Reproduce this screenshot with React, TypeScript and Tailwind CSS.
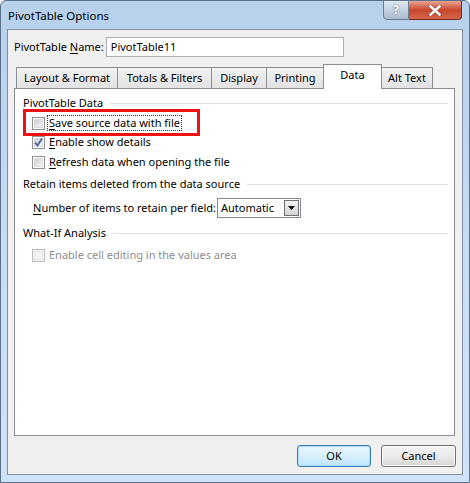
import React from "react";

const font = { fontFamily: '"Noto Sans", "Segoe UI", Arial, sans-serif' };

function U({ children }: { children: React.ReactNode }) {
  return <span className="underline underline-offset-[2px] decoration-[1px]">{children}</span>;
}

function Checkbox({ checked, disabled }: { checked?: boolean; disabled?: boolean }) {
  return (
    <div
      className={
        "w-[13px] h-[13px] border flex items-center justify-center shrink-0 " +
        (disabled ? "border-[#bcbcbc] bg-[#f4f4f4]" : "border-[#8e8f8f] bg-white")
      }
    >
      <div
        className={
          "w-[9px] h-[9px] flex items-center justify-center " +
          (disabled ? "bg-[#f4f4f4] border border-[#e6e6e6]" : "bg-gradient-to-br from-[#cbcfd5] to-[#f6f6f6] border border-[#d8dbe0]")
        }
      >
        {checked && (
          <svg width="9" height="9" viewBox="0 0 9 9" className="overflow-visible">
            <path d="M1 4.5 L3.5 7.5 L8 0.5" fill="none" stroke="#4a5f97" strokeWidth="1.8" />
          </svg>
        )}
      </div>
    </div>
  );
}

function Header({ text }: { text: string }) {
  return (
    <div className="flex items-center h-[16px]">
      <span className="whitespace-nowrap">{text}</span>
      <div className="flex-1 h-px bg-[#dcdfe4] ml-[7px]" />
    </div>
  );
}

function Tab({ label, w }: { label: string; w: string }) {
  return (
    <div
      className={
        "h-[21px] mt-[3px] border border-[#8b8e95] border-b-0 -mr-px flex items-center justify-center bg-gradient-to-b from-[#f2f2f2] to-[#e2e2e2] " +
        w
      }
    >
      {label}
    </div>
  );
}

export default function App() {
  return (
    <div
      className="w-[470px] h-[483px] relative text-[11px] text-black bg-gradient-to-b from-[#b7d0ec] via-[#c8dcf2] to-[#cfe2f6] border border-[#5a6f8a] rounded-t-[6px] overflow-hidden"
      style={font}
    >
      {/* title bar */}
      <div className="h-[28px] flex items-center pl-[7px] text-[11.5px] pt-[1px]">PivotTable Options</div>
      {/* caption buttons */}
      <div className="absolute top-[-1px] left-[382px] flex">
        <div className="w-[26px] h-[20px] border border-[#6b7e98] rounded-bl-[4px] bg-gradient-to-b from-[#dfe8f2] via-[#c4d2e1] to-[#aab9cc] flex items-center justify-center text-[12px] font-bold text-white [text-shadow:0_0_2px_#44536a]">
          ?
        </div>
        <div className="w-[53px] h-[20px] border border-[#6f2a1f] border-l-0 rounded-br-[4px] bg-gradient-to-b from-[#e8a493] via-[#c9452b] to-[#d4674c] flex items-center justify-center">
          <svg width="14" height="11" viewBox="0 0 14 11">
            <path d="M2 1 L12 10 M12 1 L2 10" stroke="#3d1a12" strokeWidth="4" strokeLinecap="round" opacity="0.35" />
            <path d="M2.5 1.5 L11.5 9.5 M11.5 1.5 L2.5 9.5" stroke="white" strokeWidth="2.6" strokeLinecap="square" />
          </svg>
        </div>
      </div>

      {/* client area */}
      <div className="ml-[6px] w-[456px] h-[446px] border border-[#828fa1] bg-[#f0f0f0] flex flex-col">
        {/* name row */}
        <div className="flex items-center mt-[7px] h-[20px] pl-[6px]">
          <span className="whitespace-nowrap">
            PivotTable <U>N</U>ame:
          </span>
          <div className="ml-[2px] w-[238px] h-[20px] border border-[#abadb3] bg-white flex items-center pl-[4px]">
            PivotTable11
          </div>
        </div>

        {/* tabs */}
        <div className="flex mt-[7px] h-[24px] pl-[8px] items-end">
          <Tab label="Layout & Format" w="w-[102px]" />
          <Tab label="Totals & Filters" w="w-[95px]" />
          <Tab label="Display" w="w-[56px]" />
          <Tab label="Printing" w="w-[58px]" />
          <div className="h-[25px] w-[59px] border border-[#8b8e95] border-b-0 bg-white -mr-px -mb-px relative z-10 flex items-center justify-center pb-[3px]">
            Data
          </div>
          <Tab label="Alt Text" w="w-[52px]" />
        </div>

        {/* panel */}
        <div className="ml-[6px] w-[441px] h-[348px] border border-[#8b8e95] bg-white relative flex flex-col pl-[8px] pr-[6px]">
          <div className="mt-[6px]">
            <Header text="PivotTable Data" />
          </div>
          <div className="mt-[4px] h-[16px] flex items-center pl-[9px] relative">
            <Checkbox />
            <span className="ml-[3px] outline outline-1 outline-dotted outline-[#333] px-px leading-[14px]">
              <U>S</U>ave source data with file
            </span>
          </div>
          <div className="mt-[3px] h-[16px] flex items-center pl-[9px]">
            <Checkbox checked />
            <span className="ml-[4px]">
              <U>E</U>nable show details
            </span>
          </div>
          <div className="mt-[4px] h-[16px] flex items-center pl-[9px]">
            <Checkbox />
            <span className="ml-[4px]">
              <U>R</U>efresh data when opening the file
            </span>
          </div>
          <div className="mt-[6px]">
            <Header text="Retain items deleted from the data source" />
          </div>
          <div className="mt-[6px] h-[20px] flex items-center pl-[10px]">
            <span className="whitespace-nowrap">
              <U>N</U>umber of items to retain per field:
            </span>
            <div className="ml-[1px] w-[84px] h-[20px] border border-[#828790] bg-white flex items-center pl-[3px] pr-px">
              <span className="flex-1">Automatic</span>
              <div className="w-[15px] h-[16px] border border-[#707070] bg-gradient-to-b from-[#f2f2f2] to-[#d5d5d5] flex items-center justify-center">
                <svg width="7" height="4" viewBox="0 0 7 4">
                  <path d="M0 0 H7 L3.5 4 Z" fill="#000" />
                </svg>
              </div>
            </div>
          </div>
          <div className="mt-[7px]">
            <Header text="What-If Analysis" />
          </div>
          <div className="mt-[6px] h-[16px] flex items-center pl-[9px] text-[#8d8d8d]">
            <Checkbox disabled />
            <span className="ml-[4px]">Enable cell editing in the values area</span>
          </div>
        </div>

        {/* buttons */}
        <div className="mt-[9px] flex justify-end gap-[10px] pr-[6px]">
          <div className="w-[74px] h-[22px] rounded-[3px] border border-[#3c7fb1] bg-gradient-to-b from-[#eaf6fd] via-[#d9f0fc] to-[#bee6fd] shadow-[inset_0_0_0_1px_#a9dbf6] flex items-center justify-center">
            OK
          </div>
          <div className="w-[75px] h-[22px] rounded-[3px] border border-[#707070] bg-gradient-to-b from-[#f2f2f2] via-[#ebebeb] to-[#d6d6d6] shadow-[inset_0_0_0_1px_#fcfcfc] flex items-center justify-center">
            Cancel
          </div>
        </div>
      </div>

      {/* red annotation box */}
      <div className="absolute left-[22px] top-[108px] w-[177px] h-[27px] border-[3px] border-[#ee1111] pointer-events-none" />
    </div>
  );
}
